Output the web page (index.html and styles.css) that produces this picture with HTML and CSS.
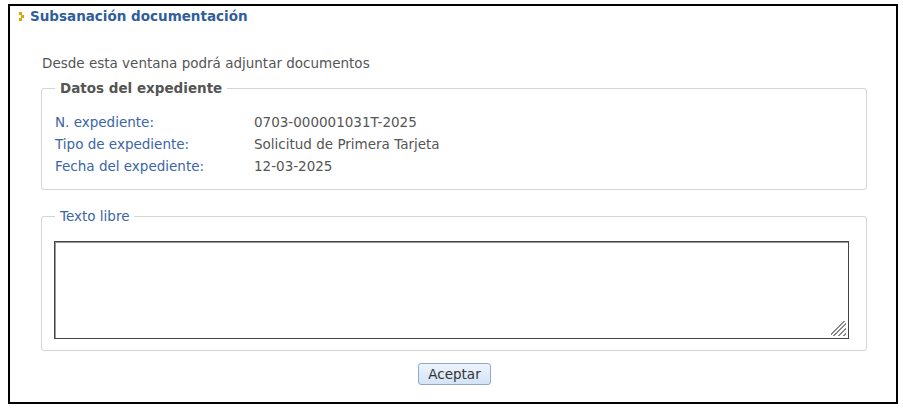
FILE: index.html
```html
<!DOCTYPE html>
<html lang="es">
<head>
  <meta charset="UTF-8" />
  <title>Subsanación documentación</title>
  <link rel="stylesheet" href="styles.css">
</head>
<body>

  <div id="ventana">
    <h1 class="titulo">
      <svg class="flecha" width="5" height="9" viewBox="0 0 5 9">
        <rect x="0" y="0" width="3" height="3" fill="#e0a400"/>
        <rect x="2" y="3" width="3" height="3" fill="#e0a400"/>
        <rect x="0" y="6" width="3" height="3" fill="#e0a400"/>
      </svg>
      Subsanación documentación
    </h1>

    <p class="intro">Desde esta ventana podrá adjuntar documentos</p>

    <fieldset class="grupo grupo-datos">
      <legend class="leyenda-datos">Datos del expediente</legend>
      <div class="fila"><span class="etiqueta">N. expediente:</span><span class="valor">0703-000001031T-2025</span></div>
      <div class="fila"><span class="etiqueta">Tipo de expediente:</span><span class="valor">Solicitud de Primera Tarjeta</span></div>
      <div class="fila"><span class="etiqueta">Fecha del expediente:</span><span class="valor">12-03-2025</span></div>
    </fieldset>

    <fieldset class="grupo grupo-texto">
      <legend class="leyenda-texto">Texto libre</legend>
      <textarea id="textoLibre"></textarea>
    </fieldset>

    <div class="acciones">
      <button type="button">Aceptar</button>
    </div>
  </div>

</body>
</html>
```

FILE: styles.css
```css
body {
  margin: 0;
  padding: 4px 0 0 8px;
  font-family: "DejaVu Sans", Verdana, sans-serif;
  font-size: 13.5px;
  color: #555;
  background: #fff;
}

#ventana {
  width: 886px;
  height: 396px;
  border: 2px solid #000;
}

.titulo {
  margin: 0;
  padding-left: 9px;
  font-size: 13.5px;
  font-weight: bold;
  color: #2f5e9b;
  display: flex;
  align-items: center;
  gap: 6px;
  height: 20px;
  line-height: 20px;
}

.flecha {
  margin-top: 1px;
}

.intro {
  margin: 29px 0 0 32px;
  line-height: 16px;
}

.grupo {
  margin: 10px 29px 0 31px;
  border: 1px solid #d4d4d4;
  border-radius: 3px;
}

.grupo-datos {
  padding: 16px 12px 12px 13px;
}

.leyenda-datos {
  padding: 0 5px;
  font-weight: bold;
  line-height: 14px;
  color: #555;
}

.leyenda-texto {
  padding: 0 5px;
  margin-left: 1px;
  line-height: 14px;
  color: #3a65a8;
}

.fila {
  display: flex;
  line-height: 22px;
}

.etiqueta {
  width: 199px;
  color: #3a65a8;
}

.valor {
  color: #555;
}

.grupo-texto {
  margin-top: 19px;
  padding: 18px 17px 11px 12px;
}

#textoLibre {
  display: block;
  width: 100%;
  height: 98px;
  box-sizing: border-box;
  border: 1px solid #444;
  box-shadow: inset 1px 1px 0 #999;
  resize: none;
  background:
    linear-gradient(135deg, transparent 0 40%, #888 40% 47%, transparent 47% 56%, #888 56% 63%, transparent 63% 72%, #888 72% 79%, transparent 79% 88%, #888 88% 95%, transparent 95%) right 2px bottom 2px / 15px 15px no-repeat,
    #fff;
}

.acciones {
  text-align: center;
  padding-top: 12px;
}

button {
  font-family: "DejaVu Sans", Verdana, sans-serif;
  font-size: 13.5px;
  color: #333;
  background: linear-gradient(#eef4fc, #d3e3f6);
  border: 1px solid #8fa9cc;
  border-radius: 3px;
  padding: 0 9px;
  height: 22px;
  margin-left: 3px;
}
```
